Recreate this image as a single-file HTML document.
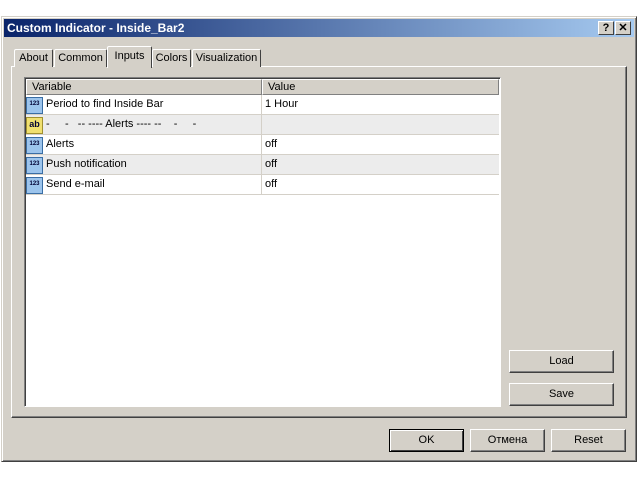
<!DOCTYPE html>
<html><head><style>
body{margin:0;width:640px;height:480px;background:#fff;position:relative;font-family:"Liberation Sans",Arial,sans-serif;font-size:11px;overflow:hidden}
.a{position:absolute;box-sizing:border-box}
.win{left:1px;top:16px;width:636px;height:446px;background:#d4d0c8;border:1px solid;border-color:#d4d0c8 #404040 #404040 #d4d0c8;box-shadow:inset 1px 1px #fff,inset -1px -1px #808080}
.title{left:4px;top:19px;width:630px;height:18px;background:linear-gradient(90deg,#0a246a,#a6caf0);color:#fff;font-weight:bold;font-size:12px;line-height:18px;padding-left:3px}
.tb{top:21px;width:16px;height:14px;background:#d4d0c8;border:1px solid;border-color:#fff #404040 #404040 #fff;color:#000;font-weight:bold;text-align:center;line-height:12px;font-size:11px}
.panel{left:11px;top:66px;width:616px;height:352px;border:1px solid;border-color:#fff #404040 #404040 #fff;box-shadow:inset -1px -1px #808080}
.tab{top:49px;height:18px;border:1px solid;border-bottom:none;border-color:#fff #404040 #404040 #fff;border-radius:2px 2px 0 0;text-align:center;line-height:16px;background:#d4d0c8}
.list{left:24px;top:77px;width:477px;height:330px;background:#fff;border:1px solid;border-color:#808080 #fff #fff #808080;box-shadow:inset 1px 1px #404040}
.hd{top:79px;height:16px;background:#d4d0c8;border:1px solid;border-color:#fff #808080 #808080 #fff;line-height:14px;padding-left:5px}
.row{left:26px;width:473px;height:20px;border-bottom:1px solid #d4d0c8;line-height:19px}
.row span{position:absolute;top:0}
.ic{position:absolute;left:0;top:2px;width:15px;height:15px;background:#9cc4ec;border:1px solid #3a6ea5;font-size:6px;line-height:13px;color:#003;text-align:center;font-weight:bold}
.btn{height:23px;border:1px solid;border-color:#fff #404040 #404040 #fff;box-shadow:inset -1px -1px #808080;text-align:center;line-height:20px;background:#d4d0c8}
</style></head><body>
<div class="a win"></div>
<div class="a title">Custom Indicator - Inside_Bar2</div>
<div class="a tb" style="left:598px">?</div>
<div class="a tb" style="left:615px">✕</div>
<div class="a panel"></div>
<div class="a tab" style="left:14px;width:39px">About</div>
<div class="a tab" style="left:54px;width:53px">Common</div>
<div class="a tab" style="left:152px;width:39px">Colors</div>
<div class="a tab" style="left:192px;width:69px">Visualization</div>
<div class="a tab" style="left:107px;top:46px;width:45px;height:22px;line-height:18px">Inputs</div>
<div class="a list"></div>
<div class="a hd" style="left:26px;width:236px">Variable</div>
<div class="a hd" style="left:262px;width:237px">Value</div>
<div class="a row" style="top:95px"><div class="ic">123</div><span style="left:20px">Period to find Inside Bar</span><span style="left:239px">1 Hour</span></div>
<div class="a row" style="top:115px;background:#ececec"><div class="ic" style="background:#f0e070;border-color:#a09030;font-size:9px">ab</div><span style="left:20px">-&nbsp;&nbsp;&nbsp;&nbsp;&nbsp;-&nbsp;&nbsp;&nbsp;-- ---- Alerts ---- --&nbsp;&nbsp;&nbsp;&nbsp;-&nbsp;&nbsp;&nbsp;&nbsp;&nbsp;-</span></div>
<div class="a row" style="top:135px"><div class="ic">123</div><span style="left:20px">Alerts</span><span style="left:239px">off</span></div>
<div class="a row" style="top:155px;background:#ececec"><div class="ic">123</div><span style="left:20px">Push notification</span><span style="left:239px">off</span></div>
<div class="a row" style="top:175px"><div class="ic">123</div><span style="left:20px">Send e-mail</span><span style="left:239px">off</span></div>
<div class="a" style="left:261px;top:95px;width:1px;height:100px;background:#d4d0c8"></div>
<div class="a btn" style="left:509px;top:350px;width:105px">Load</div>
<div class="a btn" style="left:509px;top:383px;width:105px">Save</div>
<div class="a btn" style="left:389px;top:429px;width:75px;border:1px solid #000;box-shadow:inset 1px 1px #fff,inset -1px -1px #404040">OK</div>
<div class="a btn" style="left:470px;top:429px;width:75px">Отмена</div>
<div class="a btn" style="left:551px;top:429px;width:75px">Reset</div>
</body></html>
